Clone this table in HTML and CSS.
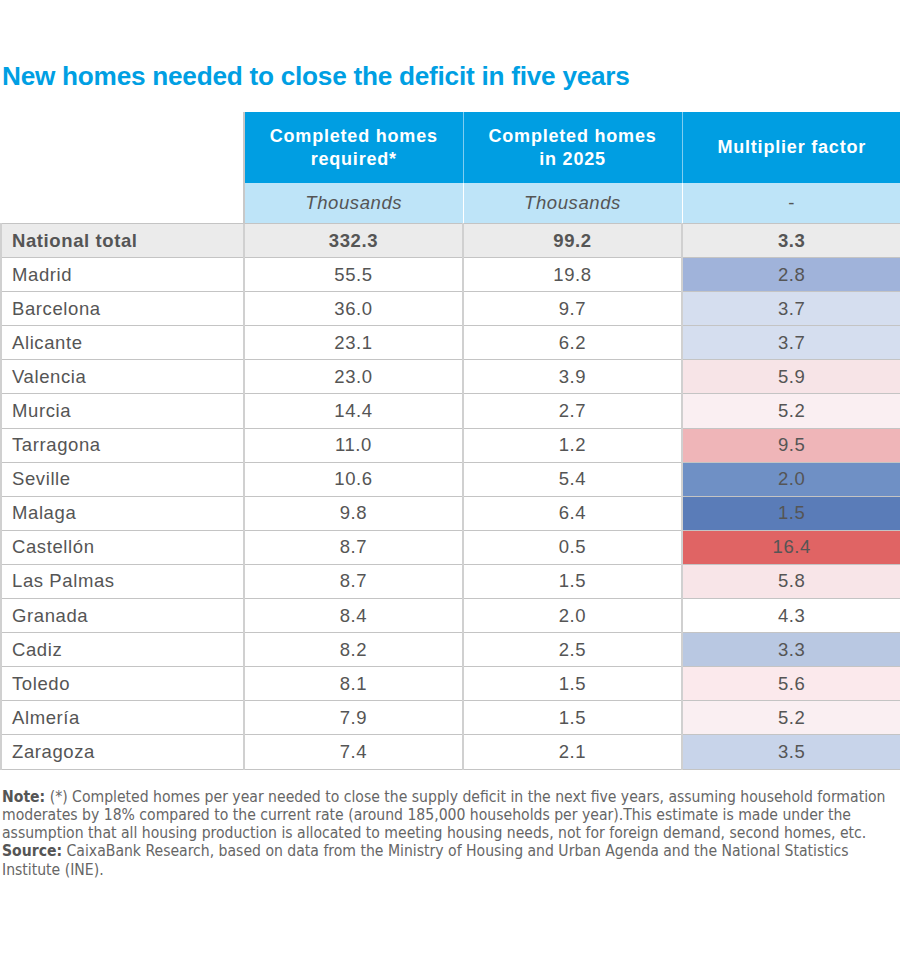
FILE: index.html
```html
<!DOCTYPE html>
<html lang="en">
<head>
<meta charset="utf-8">
<title>New homes needed to close the deficit in five years</title>
<link rel="stylesheet" href="styles.css">
</head>
<body>
<div class="page">
  <h1 class="title">New homes needed to close the deficit in five years</h1>
  <table class="data">
    <colgroup>
      <col class="c-name"><col class="c-num"><col class="c-num"><col class="c-num">
    </colgroup>
    <thead>
      <tr class="head-main">
        <th class="blank"></th>
        <th>Completed homes<br>required*</th>
        <th>Completed homes<br>in 2025</th>
        <th>Multiplier factor</th>
      </tr>
      <tr class="head-unit">
        <th class="blank"></th>
        <th><em>Thousands</em></th>
        <th><em>Thousands</em></th>
        <th>-</th>
      </tr>
    </thead>
    <tbody>
      <tr class="total"><td>National total</td><td>332.3</td><td>99.2</td><td>3.3</td></tr>
      <tr><td>Madrid</td><td>55.5</td><td>19.8</td><td class="m m28">2.8</td></tr>
      <tr><td>Barcelona</td><td>36.0</td><td>9.7</td><td class="m m37">3.7</td></tr>
      <tr><td>Alicante</td><td>23.1</td><td>6.2</td><td class="m m37">3.7</td></tr>
      <tr><td>Valencia</td><td>23.0</td><td>3.9</td><td class="m m59">5.9</td></tr>
      <tr><td>Murcia</td><td>14.4</td><td>2.7</td><td class="m m52">5.2</td></tr>
      <tr><td>Tarragona</td><td>11.0</td><td>1.2</td><td class="m m95">9.5</td></tr>
      <tr><td>Seville</td><td>10.6</td><td>5.4</td><td class="m m20">2.0</td></tr>
      <tr><td>Malaga</td><td>9.8</td><td>6.4</td><td class="m m15">1.5</td></tr>
      <tr><td>Castellón</td><td>8.7</td><td>0.5</td><td class="m m164">16.4</td></tr>
      <tr><td>Las Palmas</td><td>8.7</td><td>1.5</td><td class="m m58">5.8</td></tr>
      <tr><td>Granada</td><td>8.4</td><td>2.0</td><td class="m m43">4.3</td></tr>
      <tr><td>Cadiz</td><td>8.2</td><td>2.5</td><td class="m m33">3.3</td></tr>
      <tr><td>Toledo</td><td>8.1</td><td>1.5</td><td class="m m56">5.6</td></tr>
      <tr><td>Almería</td><td>7.9</td><td>1.5</td><td class="m m52">5.2</td></tr>
      <tr><td>Zaragoza</td><td>7.4</td><td>2.1</td><td class="m m35">3.5</td></tr>
    </tbody>
  </table>
  <p class="note"><strong>Note:</strong> (*) Completed homes per year needed to close the supply deficit in the next five years, assuming household formation moderates by 18% compared to the current rate (around 185,000 households per year).This estimate is made under the assumption that all housing production is allocated to meeting housing needs, not for foreign demand, second homes, etc.<br><strong>Source:</strong> CaixaBank Research, based on data from the Ministry of Housing and Urban Agenda and the National Statistics Institute (INE).</p>
</div>
</body>
</html>
```

FILE: styles.css
```css
html, body {
  margin: 0;
  padding: 0;
  background: #ffffff;
}

.page {
  width: 900px;
  font-family: "Liberation Sans", Arial, sans-serif;
  color: #555555;
}

.title {
  margin: 0 0 22px 0;
  padding: 63px 0 0 2px;
  font-size: 26.2px;
  line-height: 27px;
  font-weight: bold;
  color: #009fe3;
  letter-spacing: -0.25px;
}

.data {
  width: 900px;
  border-collapse: collapse;
  table-layout: fixed;
}

.c-name { width: 243px; }
.c-num { width: 219px; }

.data th,
.data td {
  padding: 0;
  text-align: center;
  font-size: 18.5px;
  letter-spacing: 0.6px;
}

.head-main th {
  height: 71px;
  background: #009ee2;
  color: #ffffff;
  font-weight: bold;
  font-size: 18px;
  line-height: 23px;
  letter-spacing: 0.8px;
  border-left: 1px solid #7fcdf0;
}

.head-unit th {
  height: 40px;
  background: #bee4f8;
  color: #555555;
  font-weight: normal;
  border-left: 1px solid #ffffff;
}

.head-unit th em {
  font-style: italic;
}

.data th.blank {
  background: #ffffff;
  border-left: none;
}

.head-main th:nth-child(2),
.head-unit th:nth-child(2) {
  border-left: 2px solid #c8c8c8;
}

.data tbody td {
  height: 33.1px;
  border-top: 1px solid #c4c4c4;
  border-bottom: 1px solid #c4c4c4;
  border-left: 2px solid #d0d0d0;
  border-right: 1px solid #c4c4c4;
  color: #555555;
}

.data tbody td:first-child {
  text-align: left;
  padding-left: 10px;
}

.total td {
  background: #ebebeb;
  font-weight: bold;
}

.m28 { background: #a0b3da; }
.m37 { background: #d5deef; }
.m59 { background: #f7e4e7; }
.m52 { background: #faeff2; }
.m95 { background: #efb5b8; }
.m20 { background: #6f90c5; }
.m15 { background: #5a7cb8; }
.m164 { background: #e06464; }
.m58 { background: #f8e5e8; }
.m43 { background: #ffffff; }
.m33 { background: #b9c8e2; }
.m56 { background: #fbe9ec; }
.m35 { background: #c8d4ea; }

.note {
  margin: 18px 0 0 2px;
  font-family: "Liberation Sans Narrow", "DejaVu Sans Condensed", "Liberation Sans", sans-serif;
  font-size: 15.6px;
  line-height: 18.3px;
  color: #666666;
}

.note strong {
  color: #555555;
}
```
